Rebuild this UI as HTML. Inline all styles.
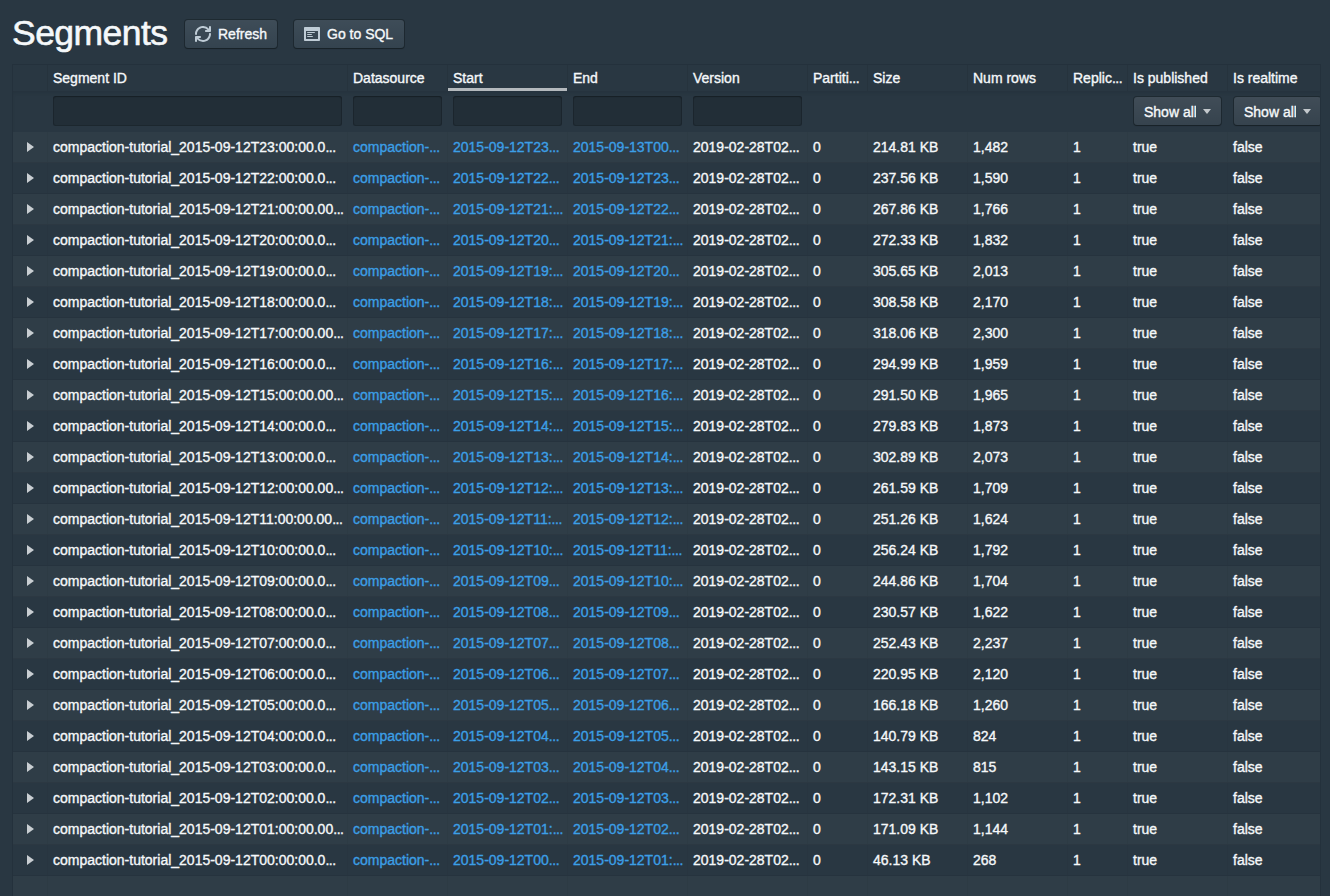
<!DOCTYPE html><html><head><meta charset="utf-8"><style>*{box-sizing:border-box;margin:0;padding:0}
html,body{width:1330px;height:896px;overflow:hidden}
body{background:#293742;font-family:"Liberation Sans",sans-serif;color:#f5f8fa;position:relative;font-size:14px;-webkit-text-stroke:0.35px currentColor}
.title{position:absolute;left:12px;top:13px;font-size:35.5px;line-height:40px;letter-spacing:-0.55px;-webkit-text-stroke:0.6px currentColor;color:#f5f8fa}
.btn{position:absolute;top:20px;height:28px;border-radius:3px;background:#34434f;box-shadow:0 0 0 1px rgba(16,22,26,.4),0 1px 1px rgba(16,22,26,.4);background-image:linear-gradient(to bottom,rgba(255,255,255,.05),rgba(255,255,255,0))}
.btn .ic{position:absolute;top:6px}
.btn .bt{position:absolute;top:5px;line-height:18px;white-space:nowrap}
.table{position:absolute;left:12px;top:64px;width:1309px;height:900px;overflow:hidden;border:1px solid rgba(16,22,26,.15)}
.hdr{position:absolute;left:0;top:0;width:1320px;height:26px}
.th{position:absolute;top:0;height:26px;line-height:26px;padding-left:5px;white-space:nowrap;overflow:hidden;border-right:1px solid rgba(16,22,26,.12)}
.th.sort{box-shadow:inset 0 -3px 0 0 rgba(255,255,255,.65)}
.flt{position:absolute;left:0;top:26px;width:1320px;height:41px;box-shadow:inset 0 3px 4px -2px rgba(16,22,26,.15)}
.fc{position:absolute;top:0;height:41px}
.inp{position:absolute;left:5px;top:5px;height:30px;border-radius:3px;background:rgba(16,22,26,.26);box-shadow:inset 0 0 0 1px rgba(16,22,26,.3),inset 0 1px 1px rgba(16,22,26,.4)}
.sel{position:absolute;left:6px;top:6px;width:87px;height:28px;border-radius:3px;background:#36434e;overflow:hidden;background-image:linear-gradient(to bottom,rgba(255,255,255,.05),rgba(255,255,255,0));box-shadow:0 0 0 1px rgba(16,22,26,.4),0 1px 1px rgba(16,22,26,.4)}
.sel span{position:absolute;left:10px;top:1px;width:52px;overflow:hidden;white-space:nowrap;line-height:28px;font-size:14px}
.sel i{position:absolute;left:69px;top:12px;width:0;height:0;border-left:4px solid transparent;border-right:4px solid transparent;border-top:5px solid #c3c8cc}
.tr{position:absolute;left:0;width:1320px;height:31px;border-bottom:1px solid rgba(16,22,26,.1)}
.tr.odd{background:rgba(255,255,255,.03)}
.td{position:absolute;top:0;height:30px;line-height:30px;padding-left:5px;white-space:nowrap;overflow:hidden;border-right:1px solid rgba(16,22,26,.045)}
.lnk{color:#3c9fe6}
.exp i{position:absolute;left:14px;top:10px;width:0;height:0;border-top:5px solid transparent;border-bottom:5px solid transparent;border-left:7px solid #c9ced2}
.pad{position:absolute;left:0;width:1320px;height:100px}
.el{letter-spacing:-0.45px}
</style></head><body>
<div class="title">Segments</div>
<div class="btn" style="left:185px;width:92px"><svg class="ic" style="left:10px" width="16" height="16" viewBox="0 0 16 16"><path fill="#bfccd6" d="M14.99 6.99c-.55 0-1 .45-1 1 0 3.31-2.69 6-6 6-1.77 0-3.36-.78-4.46-2h1.46c.55 0 1-.45 1-1s-.45-1-1-1h-4c-.55 0-1 .45-1 1v4c0 .55.45 1 1 1s1-.45 1-1v-1.74a7.95 7.95 0 006 2.74c4.42 0 8-3.58 8-8 0-.55-.45-1-1-1zm0-7c-.55 0-1 .45-1 1v1.74a7.95 7.95 0 00-6-2.74c-4.42 0-8 3.58-8 8 0 .55.45 1 1 1s1-.45 1-1c0-3.310 2.69-6 6-6 1.77 0 3.36.78 4.46 2h-1.46c-.55 0-1 .45-1 1s.45 1 1 1h4c.55 0 1-.45 1-1v-4c0-.55-.45-1-1-1z"/></svg><span class="bt" style="left:33px">Refresh</span></div>
<div class="btn" style="left:294px;width:110px"><svg class="ic" style="left:10px" width="16" height="16" viewBox="0 0 16 16"><path fill="#bfccd6" d="M3.5 7h7c.28 0 .5-.22.5-.5s-.22-.5-.5-.5h-7c-.28 0-.5.22-.5.5s.22.5.5.5zM15 1H1c-.55 0-1 .45-1 1v12c0 .55.45 1 1 1h14c.55 0 1-.45 1-1V2c0-.55-.45-1-1-1zm-1 12H2V5h12v8zM3.5 9h4c.28 0 .5-.22.5-.5S7.78 8 7.5 8h-4c-.28 0-.5.22-.5.5s.22.5.5.5zm0 2h5c.28 0 .5-.22.5-.5s-.22-.5-.5-.5h-5c-.28 0-.5.22-.5.5s.22.5.5.5z"/></svg><span class="bt" style="left:33px">Go to SQL</span></div>
<div class="table">
<div class="hdr">
<div class="th" style="left:0px;width:35px"></div>
<div class="th" style="left:35px;width:300px">Segment ID</div>
<div class="th" style="left:335px;width:100px">Datasource</div>
<div class="th sort" style="left:435px;width:120px">Start</div>
<div class="th" style="left:555px;width:120px">End</div>
<div class="th" style="left:675px;width:120px">Version</div>
<div class="th" style="left:795px;width:60px">Partiti<span class="el">...</span></div>
<div class="th" style="left:855px;width:100px">Size</div>
<div class="th" style="left:955px;width:100px">Num rows</div>
<div class="th" style="left:1055px;width:60px">Replic<span class="el">...</span></div>
<div class="th" style="left:1115px;width:100px">Is published</div>
<div class="th" style="left:1215px;width:100px">Is realtime</div>
</div>
<div class="flt">
<div class="fc" style="left:0px;width:35px"></div>
<div class="fc" style="left:35px;width:300px"><div class="inp" style="width:289px"></div></div>
<div class="fc" style="left:335px;width:100px"><div class="inp" style="width:89px"></div></div>
<div class="fc" style="left:435px;width:120px"><div class="inp" style="width:109px"></div></div>
<div class="fc" style="left:555px;width:120px"><div class="inp" style="width:109px"></div></div>
<div class="fc" style="left:675px;width:120px"><div class="inp" style="width:109px"></div></div>
<div class="fc" style="left:795px;width:60px"></div>
<div class="fc" style="left:855px;width:100px"></div>
<div class="fc" style="left:955px;width:100px"></div>
<div class="fc" style="left:1055px;width:60px"></div>
<div class="fc" style="left:1115px;width:100px"><div class="sel"><span>Show all</span><i></i></div></div>
<div class="fc" style="left:1215px;width:100px"><div class="sel"><span>Show all</span><i></i></div></div>
</div>
<div class="tr odd" style="top:67px">
<div class="td exp" style="left:0px;width:35px"><i></i></div>
<div class="td" style="left:35px;width:300px">compaction-tutorial_2015-09-12T23:00:00.0<span class="el">...</span></div>
<div class="td lnk" style="left:335px;width:100px">compaction-<span class="el">...</span></div>
<div class="td lnk" style="left:435px;width:120px">2015-09-12T23<span class="el">...</span></div>
<div class="td lnk" style="left:555px;width:120px">2015-09-13T00<span class="el">...</span></div>
<div class="td" style="left:675px;width:120px">2019-02-28T02<span class="el">...</span></div>
<div class="td" style="left:795px;width:60px">0</div>
<div class="td" style="left:855px;width:100px">214.81 KB</div>
<div class="td" style="left:955px;width:100px">1,482</div>
<div class="td" style="left:1055px;width:60px">1</div>
<div class="td" style="left:1115px;width:100px">true</div>
<div class="td" style="left:1215px;width:100px">false</div>
</div>
<div class="tr" style="top:98px">
<div class="td exp" style="left:0px;width:35px"><i></i></div>
<div class="td" style="left:35px;width:300px">compaction-tutorial_2015-09-12T22:00:00.0<span class="el">...</span></div>
<div class="td lnk" style="left:335px;width:100px">compaction-<span class="el">...</span></div>
<div class="td lnk" style="left:435px;width:120px">2015-09-12T22<span class="el">...</span></div>
<div class="td lnk" style="left:555px;width:120px">2015-09-12T23<span class="el">...</span></div>
<div class="td" style="left:675px;width:120px">2019-02-28T02<span class="el">...</span></div>
<div class="td" style="left:795px;width:60px">0</div>
<div class="td" style="left:855px;width:100px">237.56 KB</div>
<div class="td" style="left:955px;width:100px">1,590</div>
<div class="td" style="left:1055px;width:60px">1</div>
<div class="td" style="left:1115px;width:100px">true</div>
<div class="td" style="left:1215px;width:100px">false</div>
</div>
<div class="tr odd" style="top:129px">
<div class="td exp" style="left:0px;width:35px"><i></i></div>
<div class="td" style="left:35px;width:300px">compaction-tutorial_2015-09-12T21:00:00.00<span class="el">...</span></div>
<div class="td lnk" style="left:335px;width:100px">compaction-<span class="el">...</span></div>
<div class="td lnk" style="left:435px;width:120px">2015-09-12T21:<span class="el">...</span></div>
<div class="td lnk" style="left:555px;width:120px">2015-09-12T22<span class="el">...</span></div>
<div class="td" style="left:675px;width:120px">2019-02-28T02<span class="el">...</span></div>
<div class="td" style="left:795px;width:60px">0</div>
<div class="td" style="left:855px;width:100px">267.86 KB</div>
<div class="td" style="left:955px;width:100px">1,766</div>
<div class="td" style="left:1055px;width:60px">1</div>
<div class="td" style="left:1115px;width:100px">true</div>
<div class="td" style="left:1215px;width:100px">false</div>
</div>
<div class="tr" style="top:160px">
<div class="td exp" style="left:0px;width:35px"><i></i></div>
<div class="td" style="left:35px;width:300px">compaction-tutorial_2015-09-12T20:00:00.0<span class="el">...</span></div>
<div class="td lnk" style="left:335px;width:100px">compaction-<span class="el">...</span></div>
<div class="td lnk" style="left:435px;width:120px">2015-09-12T20<span class="el">...</span></div>
<div class="td lnk" style="left:555px;width:120px">2015-09-12T21:<span class="el">...</span></div>
<div class="td" style="left:675px;width:120px">2019-02-28T02<span class="el">...</span></div>
<div class="td" style="left:795px;width:60px">0</div>
<div class="td" style="left:855px;width:100px">272.33 KB</div>
<div class="td" style="left:955px;width:100px">1,832</div>
<div class="td" style="left:1055px;width:60px">1</div>
<div class="td" style="left:1115px;width:100px">true</div>
<div class="td" style="left:1215px;width:100px">false</div>
</div>
<div class="tr odd" style="top:191px">
<div class="td exp" style="left:0px;width:35px"><i></i></div>
<div class="td" style="left:35px;width:300px">compaction-tutorial_2015-09-12T19:00:00.0<span class="el">...</span></div>
<div class="td lnk" style="left:335px;width:100px">compaction-<span class="el">...</span></div>
<div class="td lnk" style="left:435px;width:120px">2015-09-12T19:<span class="el">...</span></div>
<div class="td lnk" style="left:555px;width:120px">2015-09-12T20<span class="el">...</span></div>
<div class="td" style="left:675px;width:120px">2019-02-28T02<span class="el">...</span></div>
<div class="td" style="left:795px;width:60px">0</div>
<div class="td" style="left:855px;width:100px">305.65 KB</div>
<div class="td" style="left:955px;width:100px">2,013</div>
<div class="td" style="left:1055px;width:60px">1</div>
<div class="td" style="left:1115px;width:100px">true</div>
<div class="td" style="left:1215px;width:100px">false</div>
</div>
<div class="tr" style="top:222px">
<div class="td exp" style="left:0px;width:35px"><i></i></div>
<div class="td" style="left:35px;width:300px">compaction-tutorial_2015-09-12T18:00:00.0<span class="el">...</span></div>
<div class="td lnk" style="left:335px;width:100px">compaction-<span class="el">...</span></div>
<div class="td lnk" style="left:435px;width:120px">2015-09-12T18:<span class="el">...</span></div>
<div class="td lnk" style="left:555px;width:120px">2015-09-12T19:<span class="el">...</span></div>
<div class="td" style="left:675px;width:120px">2019-02-28T02<span class="el">...</span></div>
<div class="td" style="left:795px;width:60px">0</div>
<div class="td" style="left:855px;width:100px">308.58 KB</div>
<div class="td" style="left:955px;width:100px">2,170</div>
<div class="td" style="left:1055px;width:60px">1</div>
<div class="td" style="left:1115px;width:100px">true</div>
<div class="td" style="left:1215px;width:100px">false</div>
</div>
<div class="tr odd" style="top:253px">
<div class="td exp" style="left:0px;width:35px"><i></i></div>
<div class="td" style="left:35px;width:300px">compaction-tutorial_2015-09-12T17:00:00.00<span class="el">...</span></div>
<div class="td lnk" style="left:335px;width:100px">compaction-<span class="el">...</span></div>
<div class="td lnk" style="left:435px;width:120px">2015-09-12T17:<span class="el">...</span></div>
<div class="td lnk" style="left:555px;width:120px">2015-09-12T18:<span class="el">...</span></div>
<div class="td" style="left:675px;width:120px">2019-02-28T02<span class="el">...</span></div>
<div class="td" style="left:795px;width:60px">0</div>
<div class="td" style="left:855px;width:100px">318.06 KB</div>
<div class="td" style="left:955px;width:100px">2,300</div>
<div class="td" style="left:1055px;width:60px">1</div>
<div class="td" style="left:1115px;width:100px">true</div>
<div class="td" style="left:1215px;width:100px">false</div>
</div>
<div class="tr" style="top:284px">
<div class="td exp" style="left:0px;width:35px"><i></i></div>
<div class="td" style="left:35px;width:300px">compaction-tutorial_2015-09-12T16:00:00.0<span class="el">...</span></div>
<div class="td lnk" style="left:335px;width:100px">compaction-<span class="el">...</span></div>
<div class="td lnk" style="left:435px;width:120px">2015-09-12T16:<span class="el">...</span></div>
<div class="td lnk" style="left:555px;width:120px">2015-09-12T17:<span class="el">...</span></div>
<div class="td" style="left:675px;width:120px">2019-02-28T02<span class="el">...</span></div>
<div class="td" style="left:795px;width:60px">0</div>
<div class="td" style="left:855px;width:100px">294.99 KB</div>
<div class="td" style="left:955px;width:100px">1,959</div>
<div class="td" style="left:1055px;width:60px">1</div>
<div class="td" style="left:1115px;width:100px">true</div>
<div class="td" style="left:1215px;width:100px">false</div>
</div>
<div class="tr odd" style="top:315px">
<div class="td exp" style="left:0px;width:35px"><i></i></div>
<div class="td" style="left:35px;width:300px">compaction-tutorial_2015-09-12T15:00:00.00<span class="el">...</span></div>
<div class="td lnk" style="left:335px;width:100px">compaction-<span class="el">...</span></div>
<div class="td lnk" style="left:435px;width:120px">2015-09-12T15:<span class="el">...</span></div>
<div class="td lnk" style="left:555px;width:120px">2015-09-12T16:<span class="el">...</span></div>
<div class="td" style="left:675px;width:120px">2019-02-28T02<span class="el">...</span></div>
<div class="td" style="left:795px;width:60px">0</div>
<div class="td" style="left:855px;width:100px">291.50 KB</div>
<div class="td" style="left:955px;width:100px">1,965</div>
<div class="td" style="left:1055px;width:60px">1</div>
<div class="td" style="left:1115px;width:100px">true</div>
<div class="td" style="left:1215px;width:100px">false</div>
</div>
<div class="tr" style="top:346px">
<div class="td exp" style="left:0px;width:35px"><i></i></div>
<div class="td" style="left:35px;width:300px">compaction-tutorial_2015-09-12T14:00:00.0<span class="el">...</span></div>
<div class="td lnk" style="left:335px;width:100px">compaction-<span class="el">...</span></div>
<div class="td lnk" style="left:435px;width:120px">2015-09-12T14:<span class="el">...</span></div>
<div class="td lnk" style="left:555px;width:120px">2015-09-12T15:<span class="el">...</span></div>
<div class="td" style="left:675px;width:120px">2019-02-28T02<span class="el">...</span></div>
<div class="td" style="left:795px;width:60px">0</div>
<div class="td" style="left:855px;width:100px">279.83 KB</div>
<div class="td" style="left:955px;width:100px">1,873</div>
<div class="td" style="left:1055px;width:60px">1</div>
<div class="td" style="left:1115px;width:100px">true</div>
<div class="td" style="left:1215px;width:100px">false</div>
</div>
<div class="tr odd" style="top:377px">
<div class="td exp" style="left:0px;width:35px"><i></i></div>
<div class="td" style="left:35px;width:300px">compaction-tutorial_2015-09-12T13:00:00.0<span class="el">...</span></div>
<div class="td lnk" style="left:335px;width:100px">compaction-<span class="el">...</span></div>
<div class="td lnk" style="left:435px;width:120px">2015-09-12T13:<span class="el">...</span></div>
<div class="td lnk" style="left:555px;width:120px">2015-09-12T14:<span class="el">...</span></div>
<div class="td" style="left:675px;width:120px">2019-02-28T02<span class="el">...</span></div>
<div class="td" style="left:795px;width:60px">0</div>
<div class="td" style="left:855px;width:100px">302.89 KB</div>
<div class="td" style="left:955px;width:100px">2,073</div>
<div class="td" style="left:1055px;width:60px">1</div>
<div class="td" style="left:1115px;width:100px">true</div>
<div class="td" style="left:1215px;width:100px">false</div>
</div>
<div class="tr" style="top:408px">
<div class="td exp" style="left:0px;width:35px"><i></i></div>
<div class="td" style="left:35px;width:300px">compaction-tutorial_2015-09-12T12:00:00.00<span class="el">...</span></div>
<div class="td lnk" style="left:335px;width:100px">compaction-<span class="el">...</span></div>
<div class="td lnk" style="left:435px;width:120px">2015-09-12T12:<span class="el">...</span></div>
<div class="td lnk" style="left:555px;width:120px">2015-09-12T13:<span class="el">...</span></div>
<div class="td" style="left:675px;width:120px">2019-02-28T02<span class="el">...</span></div>
<div class="td" style="left:795px;width:60px">0</div>
<div class="td" style="left:855px;width:100px">261.59 KB</div>
<div class="td" style="left:955px;width:100px">1,709</div>
<div class="td" style="left:1055px;width:60px">1</div>
<div class="td" style="left:1115px;width:100px">true</div>
<div class="td" style="left:1215px;width:100px">false</div>
</div>
<div class="tr odd" style="top:439px">
<div class="td exp" style="left:0px;width:35px"><i></i></div>
<div class="td" style="left:35px;width:300px">compaction-tutorial_2015-09-12T11:00:00.00<span class="el">...</span></div>
<div class="td lnk" style="left:335px;width:100px">compaction-<span class="el">...</span></div>
<div class="td lnk" style="left:435px;width:120px">2015-09-12T11:<span class="el">...</span></div>
<div class="td lnk" style="left:555px;width:120px">2015-09-12T12:<span class="el">...</span></div>
<div class="td" style="left:675px;width:120px">2019-02-28T02<span class="el">...</span></div>
<div class="td" style="left:795px;width:60px">0</div>
<div class="td" style="left:855px;width:100px">251.26 KB</div>
<div class="td" style="left:955px;width:100px">1,624</div>
<div class="td" style="left:1055px;width:60px">1</div>
<div class="td" style="left:1115px;width:100px">true</div>
<div class="td" style="left:1215px;width:100px">false</div>
</div>
<div class="tr" style="top:470px">
<div class="td exp" style="left:0px;width:35px"><i></i></div>
<div class="td" style="left:35px;width:300px">compaction-tutorial_2015-09-12T10:00:00.0<span class="el">...</span></div>
<div class="td lnk" style="left:335px;width:100px">compaction-<span class="el">...</span></div>
<div class="td lnk" style="left:435px;width:120px">2015-09-12T10:<span class="el">...</span></div>
<div class="td lnk" style="left:555px;width:120px">2015-09-12T11:<span class="el">...</span></div>
<div class="td" style="left:675px;width:120px">2019-02-28T02<span class="el">...</span></div>
<div class="td" style="left:795px;width:60px">0</div>
<div class="td" style="left:855px;width:100px">256.24 KB</div>
<div class="td" style="left:955px;width:100px">1,792</div>
<div class="td" style="left:1055px;width:60px">1</div>
<div class="td" style="left:1115px;width:100px">true</div>
<div class="td" style="left:1215px;width:100px">false</div>
</div>
<div class="tr odd" style="top:501px">
<div class="td exp" style="left:0px;width:35px"><i></i></div>
<div class="td" style="left:35px;width:300px">compaction-tutorial_2015-09-12T09:00:00.0<span class="el">...</span></div>
<div class="td lnk" style="left:335px;width:100px">compaction-<span class="el">...</span></div>
<div class="td lnk" style="left:435px;width:120px">2015-09-12T09<span class="el">...</span></div>
<div class="td lnk" style="left:555px;width:120px">2015-09-12T10:<span class="el">...</span></div>
<div class="td" style="left:675px;width:120px">2019-02-28T02<span class="el">...</span></div>
<div class="td" style="left:795px;width:60px">0</div>
<div class="td" style="left:855px;width:100px">244.86 KB</div>
<div class="td" style="left:955px;width:100px">1,704</div>
<div class="td" style="left:1055px;width:60px">1</div>
<div class="td" style="left:1115px;width:100px">true</div>
<div class="td" style="left:1215px;width:100px">false</div>
</div>
<div class="tr" style="top:532px">
<div class="td exp" style="left:0px;width:35px"><i></i></div>
<div class="td" style="left:35px;width:300px">compaction-tutorial_2015-09-12T08:00:00.0<span class="el">...</span></div>
<div class="td lnk" style="left:335px;width:100px">compaction-<span class="el">...</span></div>
<div class="td lnk" style="left:435px;width:120px">2015-09-12T08<span class="el">...</span></div>
<div class="td lnk" style="left:555px;width:120px">2015-09-12T09<span class="el">...</span></div>
<div class="td" style="left:675px;width:120px">2019-02-28T02<span class="el">...</span></div>
<div class="td" style="left:795px;width:60px">0</div>
<div class="td" style="left:855px;width:100px">230.57 KB</div>
<div class="td" style="left:955px;width:100px">1,622</div>
<div class="td" style="left:1055px;width:60px">1</div>
<div class="td" style="left:1115px;width:100px">true</div>
<div class="td" style="left:1215px;width:100px">false</div>
</div>
<div class="tr odd" style="top:563px">
<div class="td exp" style="left:0px;width:35px"><i></i></div>
<div class="td" style="left:35px;width:300px">compaction-tutorial_2015-09-12T07:00:00.0<span class="el">...</span></div>
<div class="td lnk" style="left:335px;width:100px">compaction-<span class="el">...</span></div>
<div class="td lnk" style="left:435px;width:120px">2015-09-12T07<span class="el">...</span></div>
<div class="td lnk" style="left:555px;width:120px">2015-09-12T08<span class="el">...</span></div>
<div class="td" style="left:675px;width:120px">2019-02-28T02<span class="el">...</span></div>
<div class="td" style="left:795px;width:60px">0</div>
<div class="td" style="left:855px;width:100px">252.43 KB</div>
<div class="td" style="left:955px;width:100px">2,237</div>
<div class="td" style="left:1055px;width:60px">1</div>
<div class="td" style="left:1115px;width:100px">true</div>
<div class="td" style="left:1215px;width:100px">false</div>
</div>
<div class="tr" style="top:594px">
<div class="td exp" style="left:0px;width:35px"><i></i></div>
<div class="td" style="left:35px;width:300px">compaction-tutorial_2015-09-12T06:00:00.0<span class="el">...</span></div>
<div class="td lnk" style="left:335px;width:100px">compaction-<span class="el">...</span></div>
<div class="td lnk" style="left:435px;width:120px">2015-09-12T06<span class="el">...</span></div>
<div class="td lnk" style="left:555px;width:120px">2015-09-12T07<span class="el">...</span></div>
<div class="td" style="left:675px;width:120px">2019-02-28T02<span class="el">...</span></div>
<div class="td" style="left:795px;width:60px">0</div>
<div class="td" style="left:855px;width:100px">220.95 KB</div>
<div class="td" style="left:955px;width:100px">2,120</div>
<div class="td" style="left:1055px;width:60px">1</div>
<div class="td" style="left:1115px;width:100px">true</div>
<div class="td" style="left:1215px;width:100px">false</div>
</div>
<div class="tr odd" style="top:625px">
<div class="td exp" style="left:0px;width:35px"><i></i></div>
<div class="td" style="left:35px;width:300px">compaction-tutorial_2015-09-12T05:00:00.0<span class="el">...</span></div>
<div class="td lnk" style="left:335px;width:100px">compaction-<span class="el">...</span></div>
<div class="td lnk" style="left:435px;width:120px">2015-09-12T05<span class="el">...</span></div>
<div class="td lnk" style="left:555px;width:120px">2015-09-12T06<span class="el">...</span></div>
<div class="td" style="left:675px;width:120px">2019-02-28T02<span class="el">...</span></div>
<div class="td" style="left:795px;width:60px">0</div>
<div class="td" style="left:855px;width:100px">166.18 KB</div>
<div class="td" style="left:955px;width:100px">1,260</div>
<div class="td" style="left:1055px;width:60px">1</div>
<div class="td" style="left:1115px;width:100px">true</div>
<div class="td" style="left:1215px;width:100px">false</div>
</div>
<div class="tr" style="top:656px">
<div class="td exp" style="left:0px;width:35px"><i></i></div>
<div class="td" style="left:35px;width:300px">compaction-tutorial_2015-09-12T04:00:00.0<span class="el">...</span></div>
<div class="td lnk" style="left:335px;width:100px">compaction-<span class="el">...</span></div>
<div class="td lnk" style="left:435px;width:120px">2015-09-12T04<span class="el">...</span></div>
<div class="td lnk" style="left:555px;width:120px">2015-09-12T05<span class="el">...</span></div>
<div class="td" style="left:675px;width:120px">2019-02-28T02<span class="el">...</span></div>
<div class="td" style="left:795px;width:60px">0</div>
<div class="td" style="left:855px;width:100px">140.79 KB</div>
<div class="td" style="left:955px;width:100px">824</div>
<div class="td" style="left:1055px;width:60px">1</div>
<div class="td" style="left:1115px;width:100px">true</div>
<div class="td" style="left:1215px;width:100px">false</div>
</div>
<div class="tr odd" style="top:687px">
<div class="td exp" style="left:0px;width:35px"><i></i></div>
<div class="td" style="left:35px;width:300px">compaction-tutorial_2015-09-12T03:00:00.0<span class="el">...</span></div>
<div class="td lnk" style="left:335px;width:100px">compaction-<span class="el">...</span></div>
<div class="td lnk" style="left:435px;width:120px">2015-09-12T03<span class="el">...</span></div>
<div class="td lnk" style="left:555px;width:120px">2015-09-12T04<span class="el">...</span></div>
<div class="td" style="left:675px;width:120px">2019-02-28T02<span class="el">...</span></div>
<div class="td" style="left:795px;width:60px">0</div>
<div class="td" style="left:855px;width:100px">143.15 KB</div>
<div class="td" style="left:955px;width:100px">815</div>
<div class="td" style="left:1055px;width:60px">1</div>
<div class="td" style="left:1115px;width:100px">true</div>
<div class="td" style="left:1215px;width:100px">false</div>
</div>
<div class="tr" style="top:718px">
<div class="td exp" style="left:0px;width:35px"><i></i></div>
<div class="td" style="left:35px;width:300px">compaction-tutorial_2015-09-12T02:00:00.0<span class="el">...</span></div>
<div class="td lnk" style="left:335px;width:100px">compaction-<span class="el">...</span></div>
<div class="td lnk" style="left:435px;width:120px">2015-09-12T02<span class="el">...</span></div>
<div class="td lnk" style="left:555px;width:120px">2015-09-12T03<span class="el">...</span></div>
<div class="td" style="left:675px;width:120px">2019-02-28T02<span class="el">...</span></div>
<div class="td" style="left:795px;width:60px">0</div>
<div class="td" style="left:855px;width:100px">172.31 KB</div>
<div class="td" style="left:955px;width:100px">1,102</div>
<div class="td" style="left:1055px;width:60px">1</div>
<div class="td" style="left:1115px;width:100px">true</div>
<div class="td" style="left:1215px;width:100px">false</div>
</div>
<div class="tr odd" style="top:749px">
<div class="td exp" style="left:0px;width:35px"><i></i></div>
<div class="td" style="left:35px;width:300px">compaction-tutorial_2015-09-12T01:00:00.00<span class="el">...</span></div>
<div class="td lnk" style="left:335px;width:100px">compaction-<span class="el">...</span></div>
<div class="td lnk" style="left:435px;width:120px">2015-09-12T01:<span class="el">...</span></div>
<div class="td lnk" style="left:555px;width:120px">2015-09-12T02<span class="el">...</span></div>
<div class="td" style="left:675px;width:120px">2019-02-28T02<span class="el">...</span></div>
<div class="td" style="left:795px;width:60px">0</div>
<div class="td" style="left:855px;width:100px">171.09 KB</div>
<div class="td" style="left:955px;width:100px">1,144</div>
<div class="td" style="left:1055px;width:60px">1</div>
<div class="td" style="left:1115px;width:100px">true</div>
<div class="td" style="left:1215px;width:100px">false</div>
</div>
<div class="tr" style="top:780px">
<div class="td exp" style="left:0px;width:35px"><i></i></div>
<div class="td" style="left:35px;width:300px">compaction-tutorial_2015-09-12T00:00:00.0<span class="el">...</span></div>
<div class="td lnk" style="left:335px;width:100px">compaction-<span class="el">...</span></div>
<div class="td lnk" style="left:435px;width:120px">2015-09-12T00<span class="el">...</span></div>
<div class="td lnk" style="left:555px;width:120px">2015-09-12T01:<span class="el">...</span></div>
<div class="td" style="left:675px;width:120px">2019-02-28T02<span class="el">...</span></div>
<div class="td" style="left:795px;width:60px">0</div>
<div class="td" style="left:855px;width:100px">46.13 KB</div>
<div class="td" style="left:955px;width:100px">268</div>
<div class="td" style="left:1055px;width:60px">1</div>
<div class="td" style="left:1115px;width:100px">true</div>
<div class="td" style="left:1215px;width:100px">false</div>
</div>
<div class="tr odd" style="top:811px;height:60px">
<div class="td" style="left:0px;width:35px;height:60px"></div>
<div class="td" style="left:35px;width:300px;height:60px"></div>
<div class="td" style="left:335px;width:100px;height:60px"></div>
<div class="td" style="left:435px;width:120px;height:60px"></div>
<div class="td" style="left:555px;width:120px;height:60px"></div>
<div class="td" style="left:675px;width:120px;height:60px"></div>
<div class="td" style="left:795px;width:60px;height:60px"></div>
<div class="td" style="left:855px;width:100px;height:60px"></div>
<div class="td" style="left:955px;width:100px;height:60px"></div>
<div class="td" style="left:1055px;width:60px;height:60px"></div>
<div class="td" style="left:1115px;width:100px;height:60px"></div>
<div class="td" style="left:1215px;width:100px;height:60px"></div>
</div>
</div>
</body></html>
